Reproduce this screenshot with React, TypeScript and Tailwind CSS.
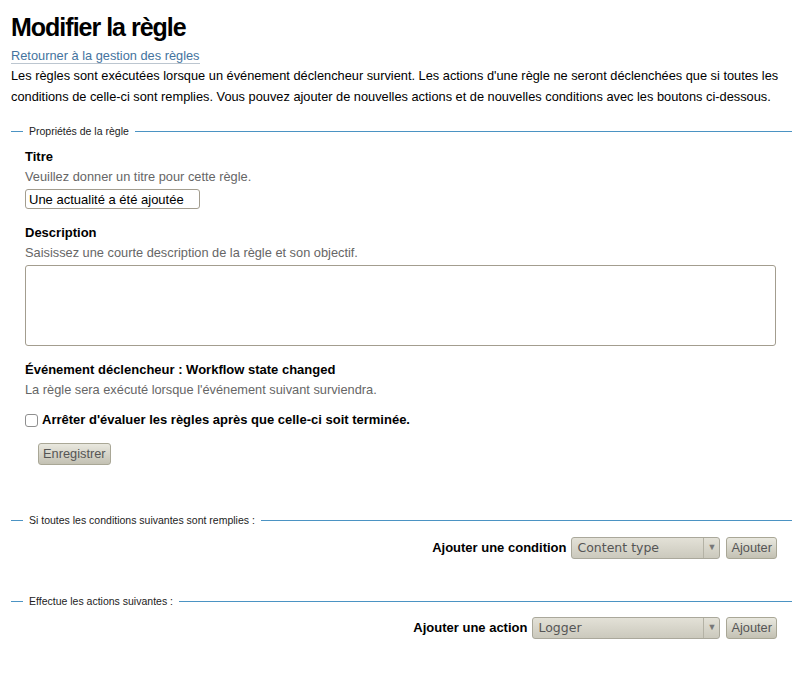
import type { ReactNode } from 'react';

function Legend({ children }: { children: ReactNode }) {
  return (
    <div className="flex h-[14px] items-start">
      <div className="mt-[7px] w-[12px] border-t border-[#4b93c3]" />
      <span className="px-[6px] text-[10.5px] leading-[14px] text-[#222]">{children}</span>
      <div className="mt-[7px] flex-1 border-t border-[#4b93c3]" />
    </div>
  );
}

function Button({ label, className = '' }: { label: string; className?: string }) {
  return (
    <button
      type="button"
      className={`h-[22px] rounded-[3px] border border-[#a9a796] bg-gradient-to-b from-[#e9e8df] to-[#c3c1b3] px-[4px] text-[12.8px] leading-[20px] text-[#555] ${className}`}
    >
      {label}
    </button>
  );
}

function Select({ value, width }: { value: string; width: string }) {
  return (
    <div className={`flex h-[22px] items-stretch rounded-[3px] border border-[#aaa89b] bg-gradient-to-b from-[#e3e1d7] to-[#cbc9bd] ${width}`}>
      <span className="flex-1 pl-[5px] font-['DejaVu_Sans',sans-serif] text-[12.5px] leading-[20px] text-[#555]">{value}</span>
      <span className="flex w-[16px] items-center justify-center border-l border-[#b4b2a5] text-[9px] text-[#777]">▼</span>
    </div>
  );
}

export default function App() {
  return (
    <div className="min-h-[682px] bg-white pl-[11px] font-['Liberation_Sans',Arial,sans-serif] text-black">
      <h1 className="h-[40px] pt-[15px] text-[25px] font-bold leading-[25px] tracking-[-1px]">Modifier la règle</h1>
      <div className="mt-[7px] h-[18px] text-[12.8px] leading-[18px]">
        <a href="#" className="border-b border-[#bcc6d0] text-[#44739e]">Retourner à la gestion des règles</a>
      </div>
      <p className="h-[42px] text-[12.8px] leading-[21px]">
        Les règles sont exécutées lorsque un événement déclencheur survient. Les actions d'une règle ne seront déclenchées que si toutes les conditions de celle-ci sont remplies. Vous pouvez ajouter de nouvelles actions et de nouvelles conditions avec les boutons ci-dessous.
      </p>

      {/* Propriétés */}
      <div className="mt-[17px]">
        <Legend>Propriétés de la règle</Legend>
        <div className="pl-[14px] pr-[16px] text-[12.8px] leading-[18px]">
          <div className="mt-[10px] text-[13px] font-bold">Titre</div>
          <div className="mt-[2px] text-[#666]">Veuillez donner un titre pour cette règle.</div>
          <input
            type="text"
            defaultValue="Une actualité a été ajoutée"
            className="mt-[3px] block h-[20px] w-[175px] rounded-[3px] border border-[#a39d8f] px-[3px] text-[13px] text-black outline-none"
          />
          <div className="mt-[15px] text-[13px] font-bold">Description</div>
          <div className="mt-[2px] text-[#666]">Saisissez une courte description de la règle et son objectif.</div>
          <textarea className="mt-[3px] block h-[81px] w-full resize-none rounded-[3px] border border-[#a39d8f] outline-none" />
          <div className="mt-[15px] text-[13px] font-bold">Événement déclencheur : Workflow state changed</div>
          <div className="mt-[2px] text-[#666]">La règle sera exécuté lorsque l'événement suivant surviendra.</div>
          <div className="mt-[12px] flex h-[18px] items-center">
            <span className="h-[13px] w-[13px] rounded-[3px] border border-[#8f8f8f] bg-white" />
            <span className="ml-[4px] text-[13px] font-bold">Arrêter d'évaluer les règles après que celle-ci soit terminée.</span>
          </div>
          <Button label="Enregistrer" className="ml-[13px] mt-[14px] block" />
        </div>
      </div>

      {/* Conditions */}
      <div className="mt-[48px]">
        <Legend>Si toutes les conditions suivantes sont remplies :</Legend>
        <div className="mt-[10px] flex h-[22px] items-center justify-end gap-[6px] pr-[15px] text-[13px]">
          <span className="mr-[-1px] font-bold">Ajouter une condition</span>
          <Select value="Content type" width="w-[149px]" />
          <Button label="Ajouter" />
        </div>
      </div>

      {/* Actions */}
      <div className="mt-[35px]">
        <Legend>Effectue les actions suivantes :</Legend>
        <div className="mt-[9px] flex h-[22px] items-center justify-end gap-[6px] pr-[15px] text-[13px]">
          <span className="mr-[-1px] font-bold">Ajouter une action</span>
          <Select value="Logger" width="w-[188px]" />
          <Button label="Ajouter" />
        </div>
      </div>
    </div>
  );
}
